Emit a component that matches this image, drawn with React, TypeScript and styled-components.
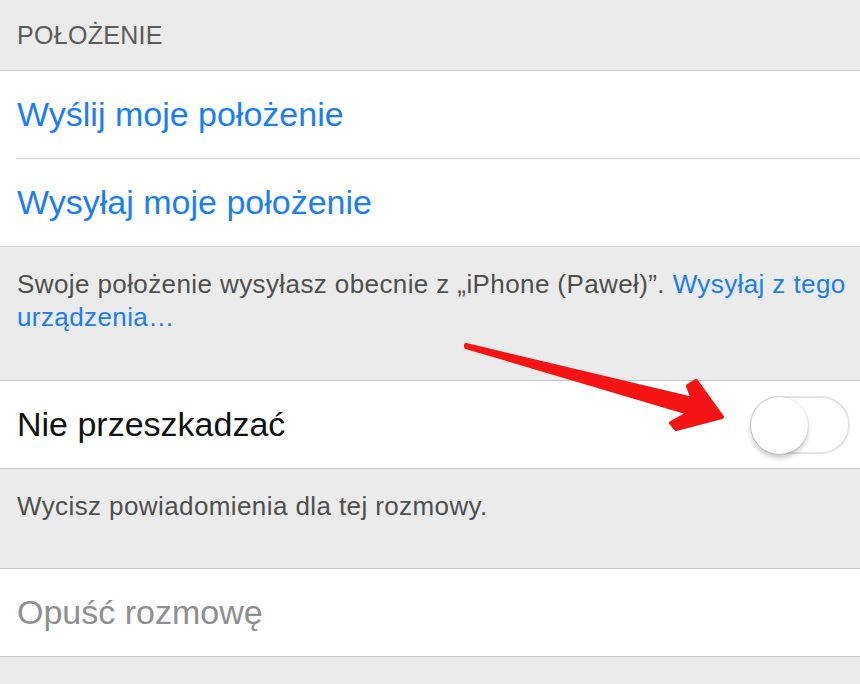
import React from 'react';
import styled, { createGlobalStyle } from 'styled-components';

const GlobalStyle = createGlobalStyle`
    html, body {
        margin: 0;
        padding: 0;
        background: #ebebeb;
    }
    body {
        font-family: "Liberation Sans", Arial, sans-serif;
        -webkit-font-smoothing: antialiased;
    }
`;

type Tone = 'link' | 'plain' | 'muted';

const toneColor: Record<Tone, string> = {
    link: '#1b7ef4',
    plain: '#111111',
    muted: '#8f8f8f',
};

const Arrow = () => (
    <ArrowSvg width={860} height={684} viewBox="0 0 860 684">
        <polygon
            points="466,345 693,399 688,386 696,381 722,417 676,429 671,423 689,413 466,347"
            fill="#f51414"
            stroke="#f51414"
            strokeWidth={4}
            strokeLinejoin="round"
        />
    </ArrowSvg>
);

const Toggle = ({ on }: { on: boolean }) => (
    <Switch $on={on}>
        <Knob $on={on} />
    </Switch>
);

const App = () => {
    return (
        <Page>
            <GlobalStyle />
            <SectionHeader>POŁOŻENIE</SectionHeader>
            <Group>
                <Cell $tone="link">Wyślij moje położenie</Cell>
                <Separator />
                <Cell $tone="link">Wysyłaj moje położenie</Cell>
            </Group>
            <Footer $height={133}>
                Swoje położenie wysyłasz obecnie z „iPhone (Paweł)”. <FooterLink>Wysyłaj z tego urządzenia…</FooterLink>
            </Footer>
            <Group>
                <Cell $tone="plain">
                    Nie przeszkadzać
                    <Toggle on={false} />
                </Cell>
            </Group>
            <Footer $height={99}>Wycisz powiadomienia dla tej rozmowy.</Footer>
            <Group>
                <Cell $tone="muted">Opuść rozmowę</Cell>
            </Group>
            <Bottom />
            <Arrow />
        </Page>
    );
};

export default App;

const Page = styled.div`
    position: relative;
    width: 860px;
    height: 684px;
    overflow: hidden;
    background: #ebebeb;
`;

const SectionHeader = styled.div`
    height: 70px;
    display: flex;
    align-items: center;
    padding-left: 17px;
    font-size: 25px;
    color: #5b5b5b;
    letter-spacing: 0.3px;
`;

const Group = styled.div`
    background: #ffffff;
    border-top: 1px solid #c8c8c8;
    border-bottom: 1px solid #c8c8c8;
`;

const Cell = styled.div<{ $tone: Tone }>`
    height: 87px;
    display: flex;
    align-items: center;
    justify-content: space-between;
    padding: 0 10px 0 17px;
    font-size: 34px;
    color: ${(p) => toneColor[p.$tone]};
`;

const Separator = styled.div`
    height: 1px;
    margin-left: 16px;
    background: #cfcfcf;
`;

const Footer = styled.div<{ $height: number }>`
    box-sizing: border-box;
    height: ${(p) => p.$height}px;
    padding: 21px 6px 0 17px;
    font-size: 26px;
    line-height: 33px;
    letter-spacing: 0.4px;
    color: #4f4f4f;
`;

const FooterLink = styled.span`
    color: #1b7ef4;
`;

const Bottom = styled.div`
    height: 27px;
`;

const Switch = styled.div<{ $on: boolean }>`
    position: relative;
    box-sizing: border-box;
    width: 100px;
    height: 58px;
    border-radius: 29px;
    border: 2px solid #e4e4e4;
    background: ${(p) => (p.$on ? '#4cd964' : '#ffffff')};
`;

const Knob = styled.div<{ $on: boolean }>`
    position: absolute;
    top: -1px;
    left: ${(p) => (p.$on ? '42px' : '-1px')};
    width: 57px;
    height: 57px;
    border-radius: 50%;
    background: #ffffff;
    box-shadow: 0 0 0 1px rgba(0, 0, 0, 0.06), 0 4px 5px rgba(0, 0, 0, 0.22);
`;

const ArrowSvg = styled.svg`
    position: absolute;
    top: 0;
    left: 0;
    pointer-events: none;
`;
